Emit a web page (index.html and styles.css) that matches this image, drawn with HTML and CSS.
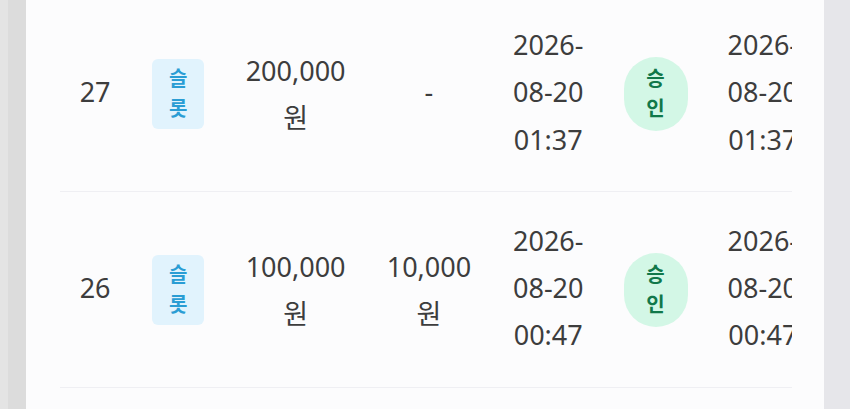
FILE: index.html
```html
<!DOCTYPE html>
<html lang="ko">
<head>
    <meta charset="utf-8">
    <meta name="viewport" content="width=device-width, initial-scale=1">
    <title>충전 내역</title>
    <link rel="stylesheet" href="styles.css">
</head>
<body>

<div class="card">
    <div class="table-wrap">
        <table class="history">
            <colgroup>
                <col class="c-no">
                <col class="c-type">
                <col class="c-amount">
                <col class="c-bonus">
                <col class="c-date">
                <col class="c-status">
                <col class="c-date">
            </colgroup>
            <tbody>
                <tr>
                    <td>27</td>
                    <td><span class="type">슬롯</span></td>
                    <td class="money">200,000 원</td>
                    <td>-</td>
                    <td class="date">2026-08-20 01:37</td>
                    <td><span class="status">승인</span></td>
                    <td class="date">2026-08-20 01:37</td>
                </tr>
                <tr>
                    <td>26</td>
                    <td><span class="type">슬롯</span></td>
                    <td class="money">100,000 원</td>
                    <td class="money">10,000 원</td>
                    <td class="date">2026-08-20 00:47</td>
                    <td><span class="status">승인</span></td>
                    <td class="date">2026-08-20 00:47</td>
                </tr>
            </tbody>
        </table>
    </div>
</div>

</body>
</html>
```

FILE: styles.css
```css
body {
    margin: 0;
    height: 409px;
    overflow: hidden;
    background: #e6e6ea;
    background: linear-gradient(to right, #e4e4e4 0 8px, #dcdcdc 8px 26px, #e6e6ea 26px);
    font-family: "Noto Sans", "Noto Sans CJK KR", sans-serif;
    color: #3d3d3d;
}

.card {
    margin: 0 26px;
    height: 100%;
    padding: 0 32px 0 34px;
    background: #fcfcfd;
}

.table-wrap {
    overflow: hidden;
}

.history {
    width: 758px;
    margin-top: -4px; /* list is scrolled a little */
    table-layout: fixed;
    border-collapse: collapse;
    font-size: 27px;
    line-height: 1.75;
    text-align: center;
}

.history .c-no { width: 70px; }
.history .c-type { width: 96px; }
.history .c-amount { width: 138px; }
.history .c-bonus { width: 128px; }
.history .c-date { width: 110px; }
.history .c-status { width: 104px; }

.history td {
    padding: 25px 16px 28px;
    vertical-align: middle;
    border-bottom: 1px solid #efeff3;
}

.history .money {
    padding-top: 30px;
}

.history .date {
    word-break: break-all;
}

.type,
.status {
    display: inline-block;
    width: 20px;
    margin-top: 5px;
    font-size: 20px;
    font-weight: 700;
    line-height: 30px;
    vertical-align: middle;
}

.type {
    padding: 5px 16px;
    border-radius: 6px;
    background: #e1f3fd;
    color: #2a9dd4;
}

.status {
    padding: 7px 22px;
    border-radius: 9999px;
    background: #d3f7e6;
    color: #11784a;
}
```
